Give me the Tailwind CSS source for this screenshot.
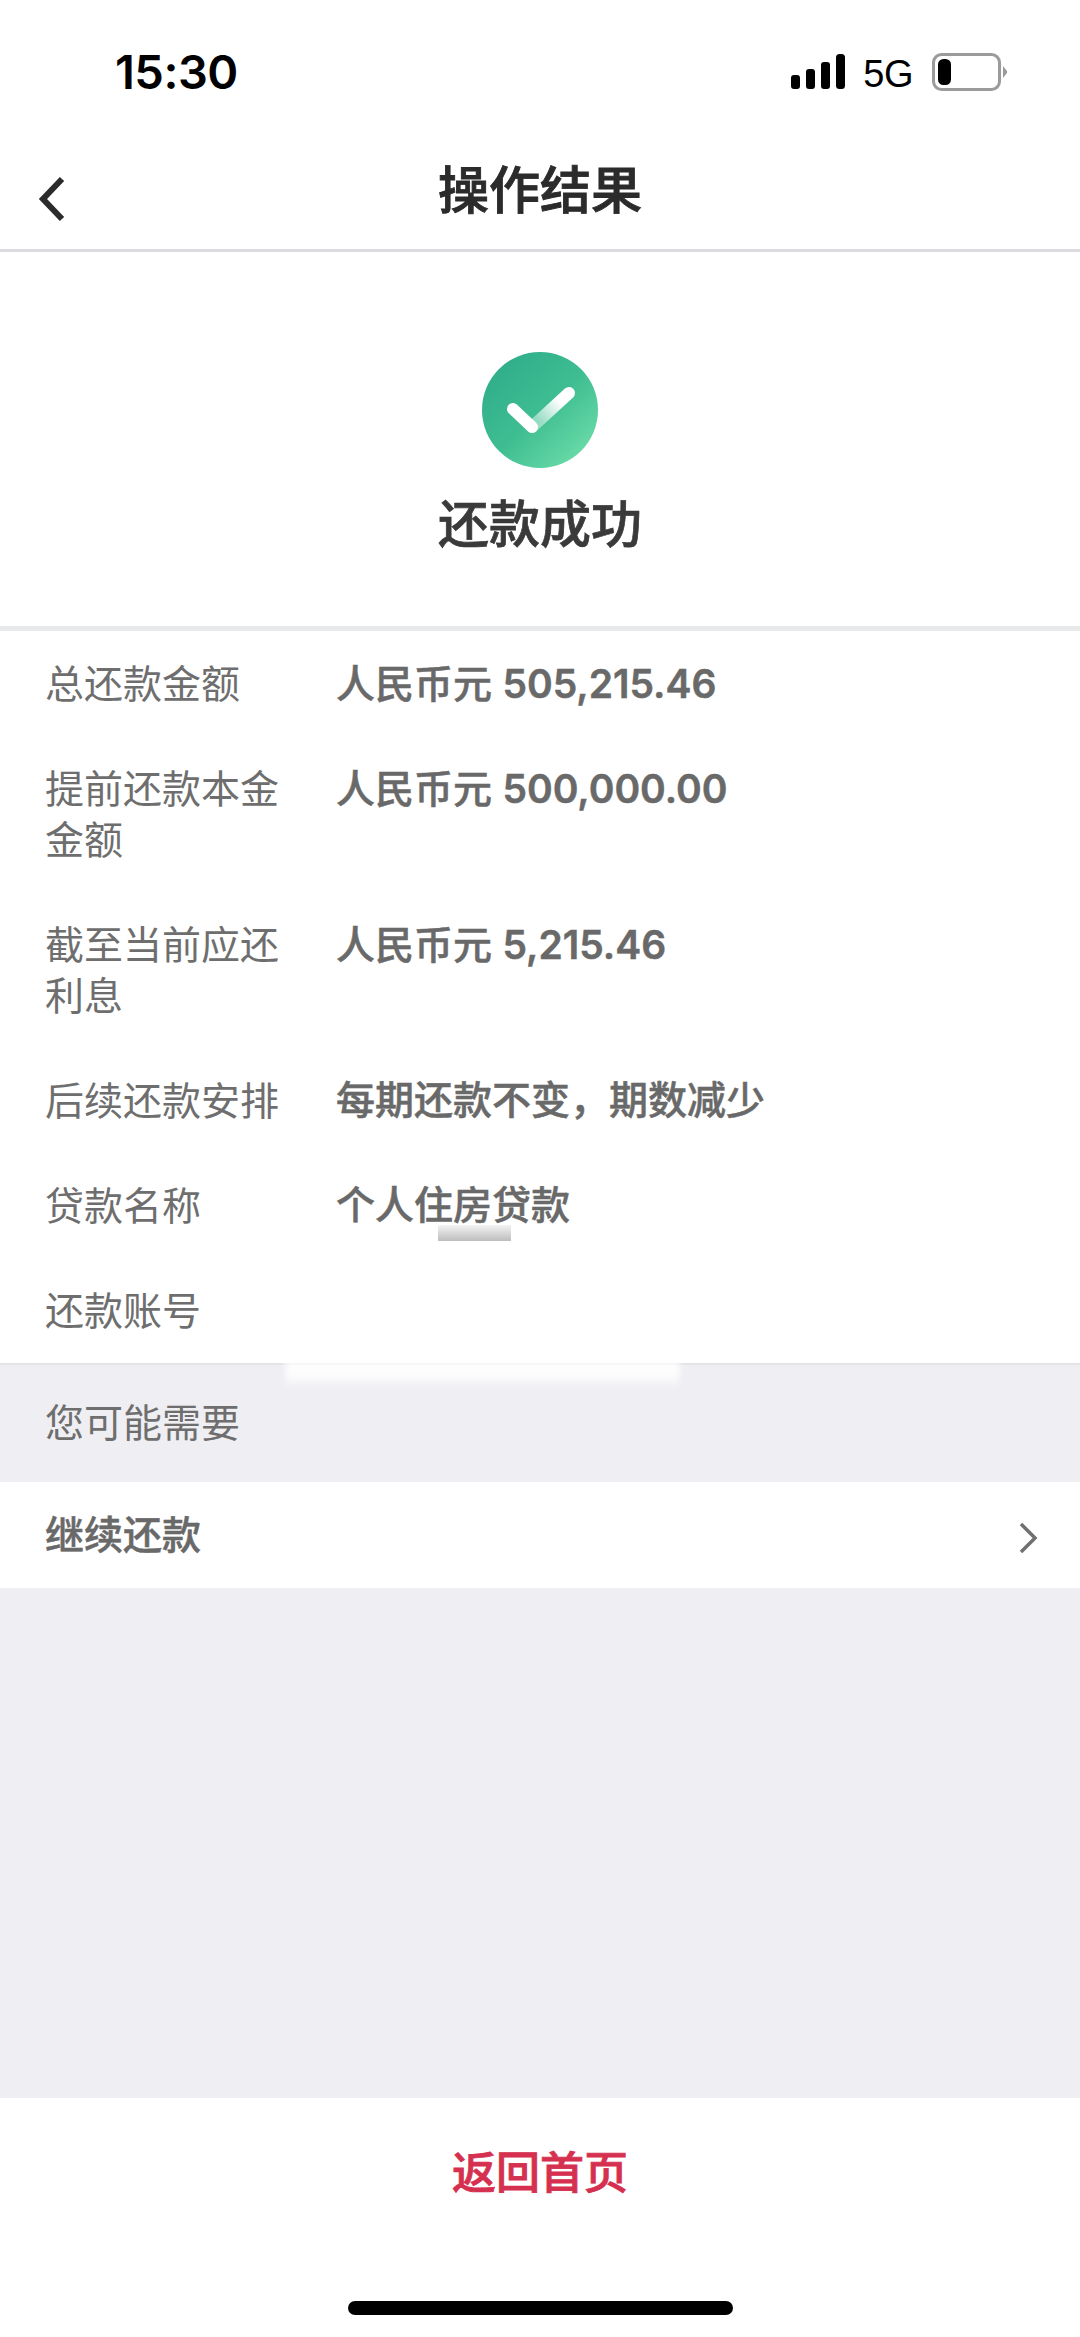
<!DOCTYPE html>
<html lang="zh-CN">
  <head>
    <meta charset="UTF-8" />
    <meta name="viewport" content="width=device-width, initial-scale=1.0" />
    <title>操作结果</title>
    <script src="https://cdn.jsdelivr.net/npm/@tailwindcss/browser@4"></script>
  </head>
  <body class="bg-[#eeeef3] font-['Inter','Noto_Sans_CJK_SC',sans-serif]">
    <div class="relative w-[1080px] h-[2337px] flex flex-col overflow-hidden">
      <!-- status bar -->
      <div class="h-[141px] bg-white flex items-start justify-between pl-[115px] pr-[73px] pt-[46px] text-black">
        <span class="text-[47px] leading-[52px] font-semibold tracking-[-0.5px]">15:30</span>
        <div class="flex items-start">
          <svg width="54" height="35" viewBox="0 0 54 35" class="mt-[8px]" fill="#000">
            <rect x="0" y="21" width="9" height="14" rx="3" />
            <rect x="15" y="15" width="9" height="20" rx="3" />
            <rect x="30" y="8" width="9" height="27" rx="3" />
            <rect x="45" y="0" width="9" height="35" rx="3.5" />
          </svg>
          <span class="ml-[18px] mt-[8px] text-[38px] leading-[40px] font-['Liberation_Sans'] tracking-[-0.5px]">5G</span>
          <svg width="75" height="38" viewBox="0 0 75 38" class="ml-[19px] mt-[7px]">
            <rect x="1.5" y="1.5" width="66" height="35" rx="8" fill="#fff" stroke="#9b9b9b" stroke-width="3" />
            <rect x="6" y="6" width="13" height="26" rx="5.5" fill="#000" />
            <path d="M71 13 L75 18 V20 L71 25 Z" fill="#9b9b9b" />
          </svg>
        </div>
      </div>

      <!-- nav -->
      <header class="relative h-[111px] bg-white border-b-[3px] border-[#dcdce0] flex justify-center">
        <svg width="30" height="46" viewBox="0 0 30 46" class="absolute left-[37px] top-[35px]" fill="none" stroke="#2b2b2b" stroke-width="6">
          <path d="M25 3 L6 23 L25 43" />
        </svg>
        <h1 class="mt-[15px] text-[51px] leading-[70px] font-medium text-[#2b2b2b] [-webkit-text-stroke:0.9px_#2b2b2b]">操作结果</h1>
      </header>

      <!-- result -->
      <section class="h-[374px] bg-white flex flex-col items-center pt-[99px]">
        <svg width="118" height="118" viewBox="0 0 118 118">
          <defs>
            <linearGradient id="disc" x1="0.15" y1="0.1" x2="0.9" y2="0.9">
              <stop offset="0" stop-color="#2fae8a" />
              <stop offset="0.5" stop-color="#3fbd92" />
              <stop offset="1" stop-color="#6bdca8" />
            </linearGradient>
            <linearGradient id="arm" gradientUnits="userSpaceOnUse" x1="58" y1="70" x2="84" y2="45">
              <stop offset="0" stop-color="#fff" stop-opacity="0.45" />
              <stop offset="0.8" stop-color="#fff" />
            </linearGradient>
          </defs>
          <circle cx="59" cy="59" r="58" fill="url(#disc)" />
          <path d="M51 76 L88 42" fill="none" stroke="url(#arm)" stroke-width="12" stroke-linecap="round" />
          <path d="M32 58 L51 76" fill="none" stroke="#fff" stroke-width="12" stroke-linecap="round" />
        </svg>
        <h2 class="mt-[21px] text-[51px] leading-[70px] font-medium text-[#3a3a3a] [-webkit-text-stroke:0.7px_#3a3a3a]">还款成功</h2>
      </section>
      <div class="h-[5px] bg-[#e8e9eb]"></div>

      <!-- detail rows -->
      <dl class="bg-white border-b-[2px] border-[#e4e4e8] grid grid-cols-[240px_1fr] gap-x-[51px] pl-[45px] text-[39px] leading-[51px] text-[#6e6e6e]">
        <dt class="py-[27px]">总还款金额</dt>
        <dd class="py-[27px] font-medium text-[#696969] [-webkit-text-stroke:0.5px_#696969]">人民币元 <span class="font-semibold">505,215.46</span></dd>
        <dt class="py-[27px]">提前还款本金金额</dt>
        <dd class="py-[27px] font-medium text-[#696969] [-webkit-text-stroke:0.5px_#696969]">人民币元 <span class="font-semibold">500,000.00</span></dd>
        <dt class="py-[27px]">截至当前应还利息</dt>
        <dd class="py-[27px] font-medium text-[#696969] [-webkit-text-stroke:0.5px_#696969]">人民币元 <span class="font-semibold">5,215.46</span></dd>
        <dt class="py-[27px]">后续还款安排</dt>
        <dd class="py-[27px] -mt-[1px] font-medium text-[#696969] [-webkit-text-stroke:0.5px_#696969]">每期还款不变，期数减少</dd>
        <dt class="py-[27px]">贷款名称</dt>
        <dd class="py-[27px] -mt-[1px] font-medium text-[#696969] [-webkit-text-stroke:0.5px_#696969]">个人住房贷款</dd>
        <dt class="py-[27px]">还款账号</dt>
        <dd class="py-[27px]"></dd>
      </dl>

      <!-- suggestions -->
      <div class="h-[117px] pl-[45px] pt-[32px] text-[39px] leading-[51px] text-[#6e6e6e]">您可能需要</div>
      <div class="h-[106px] bg-white flex items-center justify-between pl-[45px] pr-[42px]">
        <span class="text-[39px] leading-[51px] font-medium text-[#696969] -mt-[1px] [-webkit-text-stroke:0.5px_#696969]">继续还款</span>
        <svg width="20" height="32" viewBox="0 0 20 32" fill="none" stroke="#707070" stroke-width="3.5" class="mt-[6px]">
          <path d="M3 2 L17 16 L3 30" />
        </svg>
      </div>

      <div class="flex-1"></div>

      <!-- footer -->
      <footer class="relative h-[239px] bg-white flex justify-center">
        <span class="mt-[44px] text-[44px] leading-[62px] font-medium text-[#d5304f] [-webkit-text-stroke:0.8px_#d5304f]">返回首页</span>
        <div class="absolute left-[348px] top-[203px] w-[385px] h-[14px] rounded-full bg-black"></div>
      </footer>

      <!-- retouching marks left in the screenshot -->
      <div class="absolute left-[438px] top-[1225px] w-[73px] h-[16px] bg-gradient-to-b from-[#f4f4f4] to-[#bdbdbd]"></div>
      <div class="absolute left-[285px] top-[1362px] w-[395px] h-[28px] bg-gradient-to-b from-white via-white/80 to-white/0 blur-[3px]"></div>
    </div>
  </body>
</html>
